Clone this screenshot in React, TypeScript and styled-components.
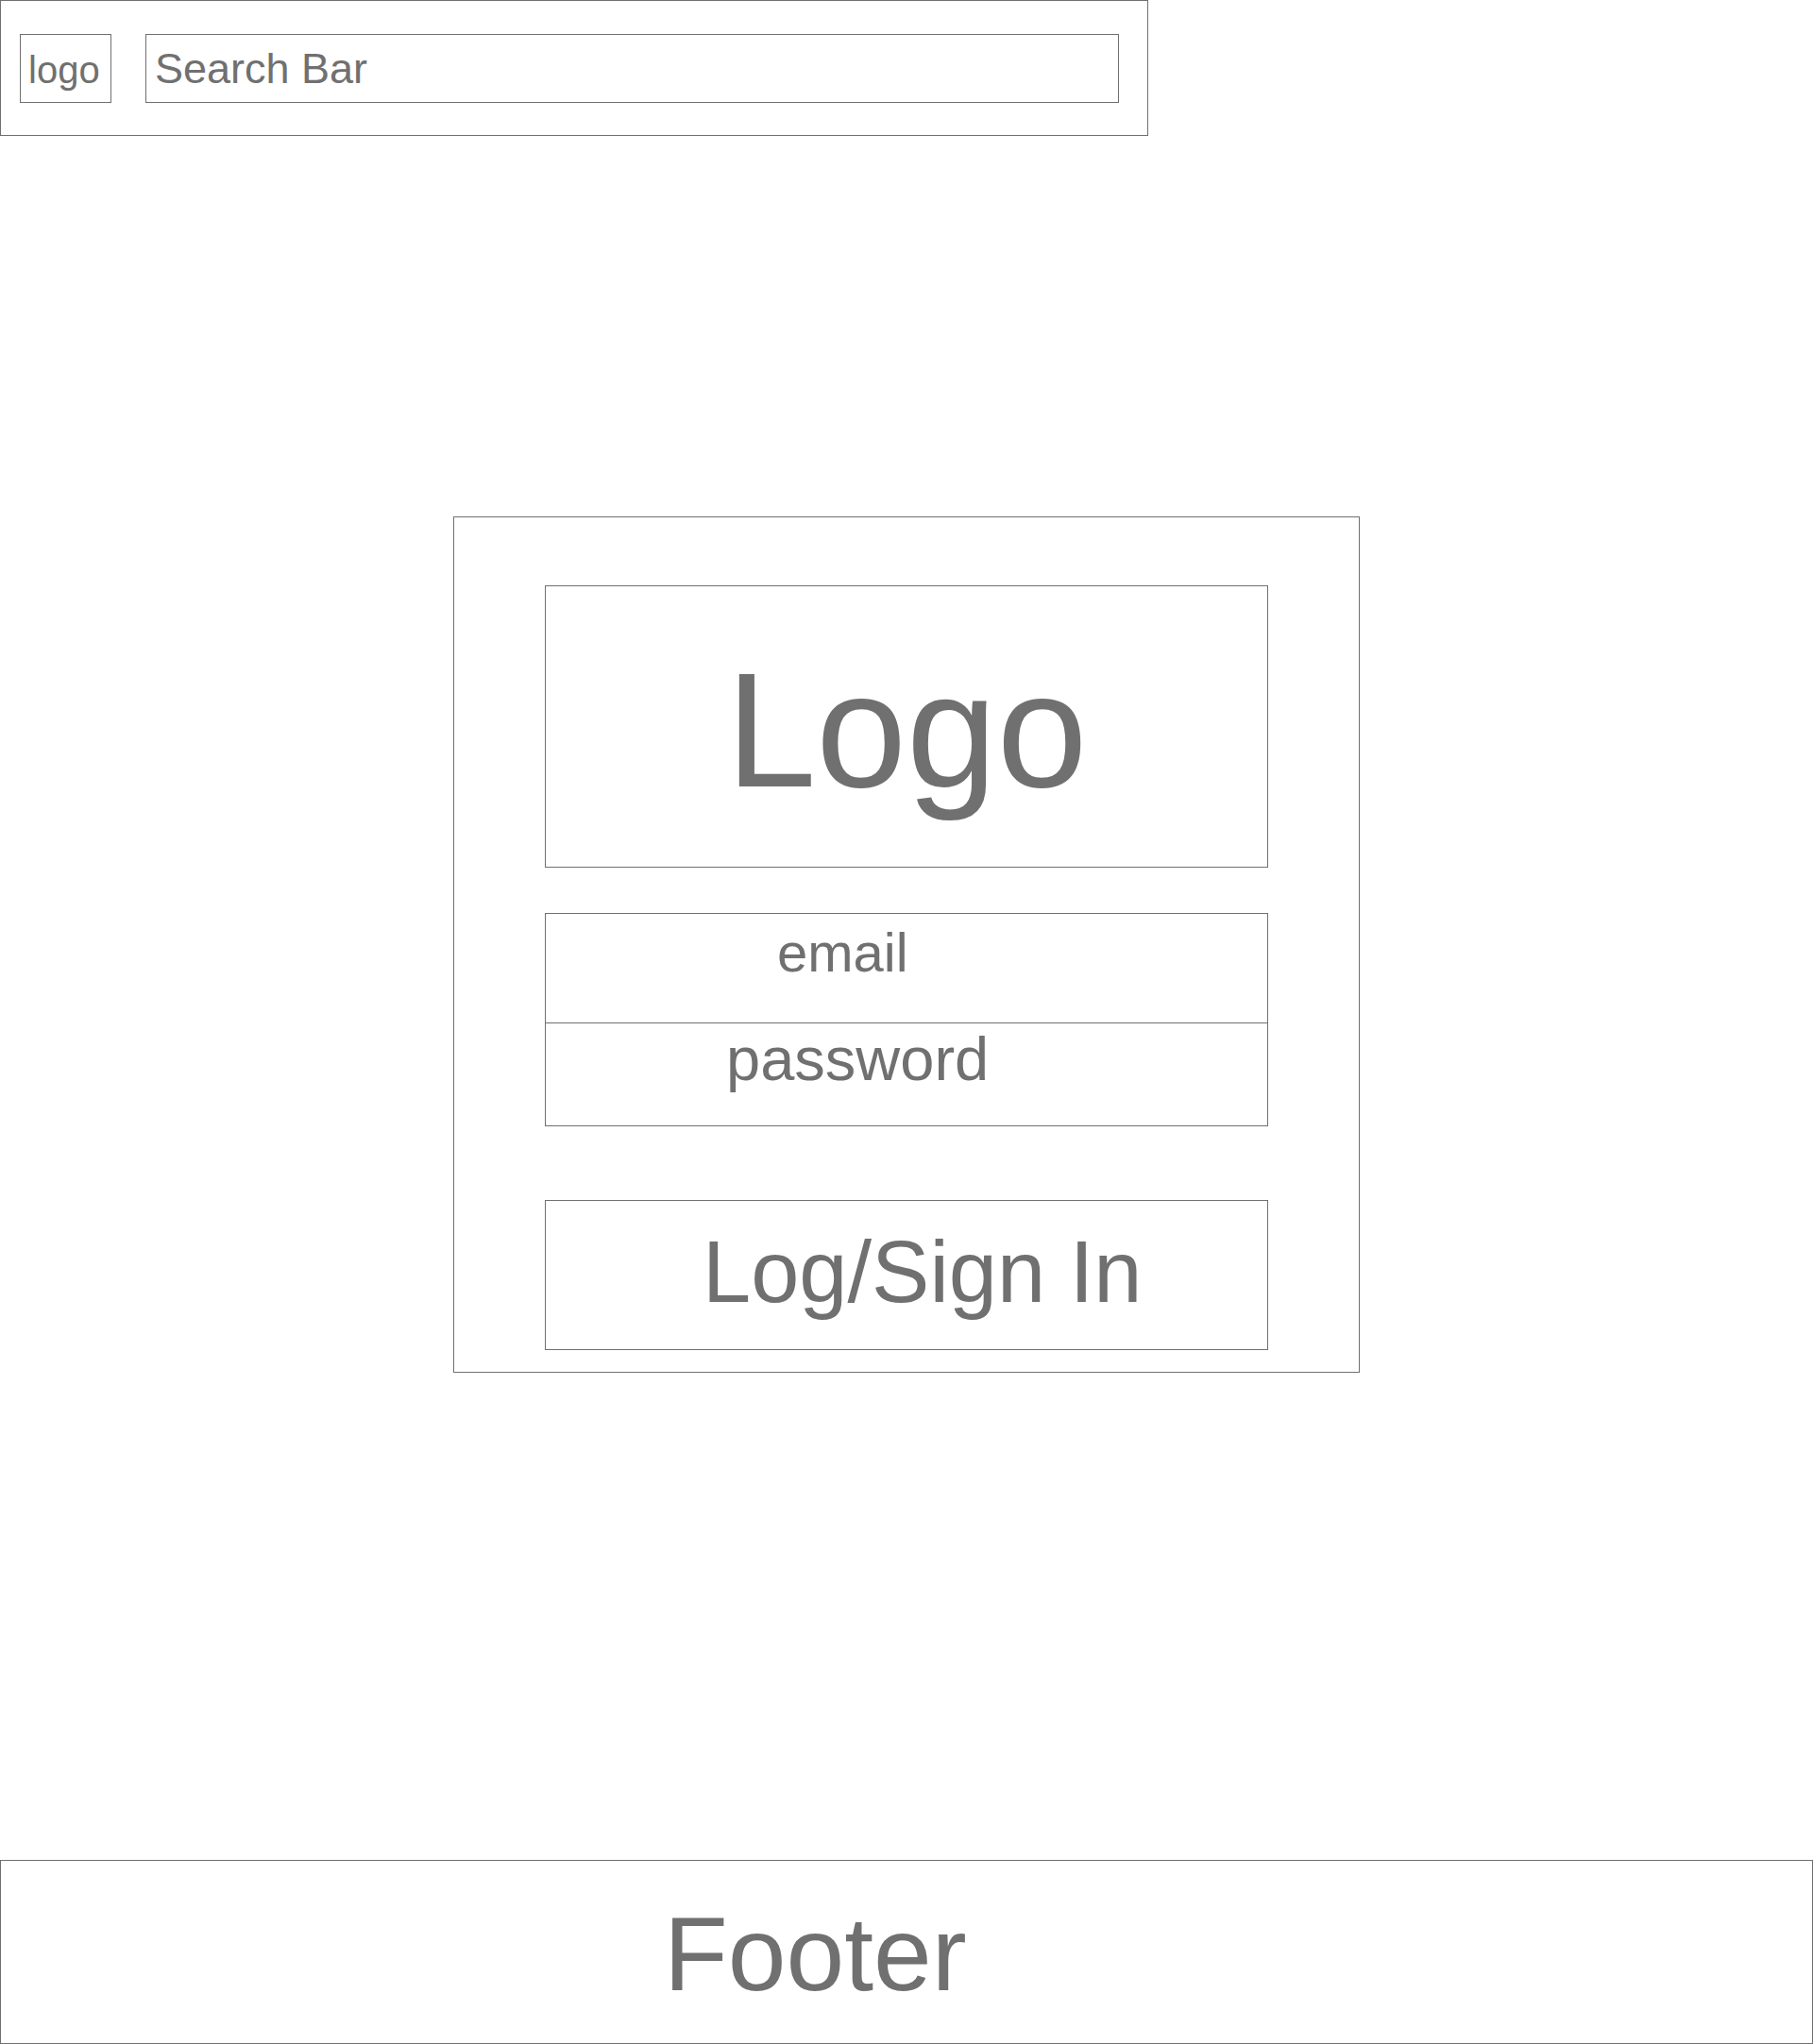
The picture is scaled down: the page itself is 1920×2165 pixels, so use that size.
import React from "react";
import styled, { createGlobalStyle } from "styled-components";

const Global = createGlobalStyle`
  html, body { margin: 0; padding: 0; background: #ffffff; }
  body { font-family: "Liberation Sans", Arial, sans-serif; color: #707070; }
  * { box-sizing: border-box; }
`;

const Page = styled.div`
  width: 1920px;
  height: 2165px;
  display: flex;
  flex-direction: column;
  background: #fff;
`;

const Header = styled.header`
  width: 1216px;
  height: 144px;
  border: 1px solid #707070;
  display: flex;
  align-items: flex-start;
  padding: 35px 0 0 20px;
  gap: 36px;
`;

const SmallLogo = styled.div`
  width: 97px;
  height: 73px;
  border: 1px solid #707070;
  font-size: 40px;
  line-height: 1;
  padding: 17px 0 0 8px;
  white-space: nowrap;
`;

const SearchBar = styled.div`
  width: 1031px;
  height: 73px;
  border: 1px solid #707070;
  font-size: 45px;
  line-height: 1;
  padding: 13px 0 0 9px;
  white-space: nowrap;
`;

const Card = styled.section`
  width: 960px;
  height: 907px;
  margin: 403px 0 0 480px;
  border: 1px solid #707070;
  padding: 72px 96px 23px 96px;
  display: flex;
  flex-direction: column;
`;

const BigLogo = styled.div`
  width: 766px;
  height: 299px;
  border: 1px solid #707070;
  font-size: 172px;
  line-height: 1;
  text-align: center;
  padding-top: 66px;
  white-space: nowrap;
`;

const Form = styled.div`
  width: 766px;
  height: 226px;
  margin-top: 48px;
  border: 1px solid #707070;
  display: flex;
  flex-direction: column;
`;

const Field = styled.div<{ $size: number; $top: number; $left: number; $h: number; $divider?: boolean }>`
  height: ${(p) => p.$h}px;
  font-size: ${(p) => p.$size}px;
  line-height: 1;
  padding: ${(p) => p.$top}px 0 0 ${(p) => p.$left}px;
  border-bottom: ${(p) => (p.$divider ? "1px solid #707070" : "none")};
  white-space: nowrap;
`;

const Button = styled.div`
  width: 766px;
  height: 159px;
  margin-top: 78px;
  border: 1px solid #707070;
  font-size: 92px;
  line-height: 1;
  padding: 29px 0 0 166px;
  white-space: nowrap;
`;

const Footer = styled.footer`
  width: 1920px;
  height: 195px;
  margin-top: 516px;
  border: 1px solid #707070;
  font-size: 111px;
  line-height: 1;
  padding: 44px 0 0 702px;
  white-space: nowrap;
`;

export default function App() {
  return (
    <>
      <Global />
      <Page>
        <Header>
          <SmallLogo>logo</SmallLogo>
          <SearchBar>Search Bar</SearchBar>
        </Header>
        <Card>
          <BigLogo>Logo</BigLogo>
          <Form>
            <Field $size={58} $top={12} $left={245} $h={116} $divider>
              email
            </Field>
            <Field $size={65} $top={5} $left={191} $h={108}>
              password
            </Field>
          </Form>
          <Button>Log/Sign In</Button>
        </Card>
        <Footer>Footer</Footer>
      </Page>
    </>
  );
}
